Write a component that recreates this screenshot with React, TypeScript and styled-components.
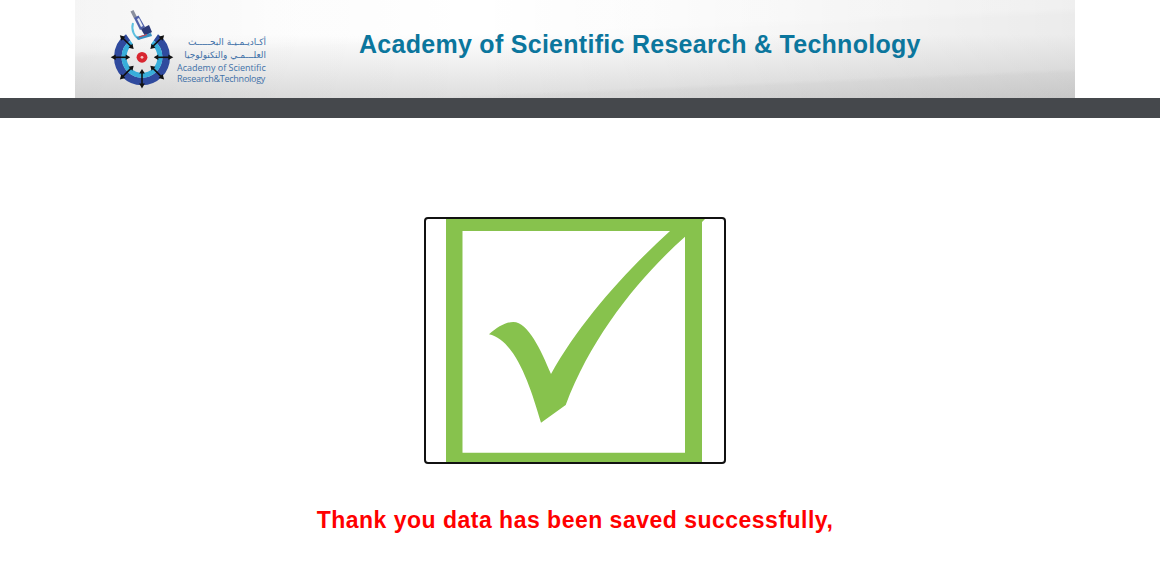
import styled, { createGlobalStyle } from 'styled-components';

const GlobalStyle = createGlobalStyle`
    html, body {
        margin: 0;
        padding: 0;
        background: #fff;
    }
`;

const Page = styled.div`
    width: 1160px;
`;

const Banner = styled.header`
    width: 1000px;
    height: 98px;
    margin-left: 75px;
    display: flex;
    align-items: flex-start;
    background:
        linear-gradient(177.5deg, rgba(0, 0, 0, 0) 79%, rgba(0, 0, 0, 0.025) 82%),
        linear-gradient(177.5deg, rgba(255, 255, 255, 0.22) 36%, rgba(255, 255, 255, 0) 41%),
        linear-gradient(90deg, rgba(0, 0, 0, 0.05) 0%, rgba(0, 0, 0, 0.015) 20%, rgba(0, 0, 0, 0) 40%, rgba(0, 0, 0, 0.02) 60%, rgba(0, 0, 0, 0.08) 100%),
        linear-gradient(180deg, #fff 0%, #fff 35%, #dedede 100%);
`;

const LogoMark = styled.svg`
    width: 70px;
    height: 84px;
    margin: 8px 0 0 33px;
    flex: none;
    filter: blur(0.3px);
`;

const LogoText = styled.div`
    width: 92px;
    margin: 36px 0 0 -1px;
    flex: none;
    color: #3f71a8;
    font-family: "Open Sans", "Liberation Sans", sans-serif;
    font-size: 9px;
    line-height: 11px;
`;

const ArabicLine = styled.div`
    direction: rtl;
    font-family: "DejaVu Sans", sans-serif;
    font-size: 9px;
    line-height: 13px;
    white-space: nowrap;
    padding-right: 3px;
`;

const LatinLine = styled.div<{ $spacing: number }>`
    white-space: nowrap;
    letter-spacing: ${(props) => props.$spacing}px;
`;

const BannerTitle = styled.h1`
    margin: 28px 0 0 90px;
    color: #0b769d;
    font-family: "Liberation Sans", Arial, sans-serif;
    font-size: 25px;
    font-weight: 700;
    line-height: 32px;
    letter-spacing: 0.28px;
    white-space: nowrap;
`;

const Bar = styled.div`
    height: 20px;
    background: #45484c;
`;

const Main = styled.main`
    width: 1150px;
    padding-top: 99px;
    display: flex;
    flex-direction: column;
    align-items: center;
`;

const Frame = styled.div`
    width: 298px;
    height: 243px;
    border: 2px solid #111;
    border-radius: 4px;
    overflow: hidden;
    background: #fff;
`;

const CheckPicture = styled.svg`
    display: block;
    width: 298px;
    height: 243px;
`;

const Message = styled.p`
    margin: 42px 0 0;
    color: #ff0000;
    font-family: "Liberation Sans", Arial, sans-serif;
    font-size: 23px;
    font-weight: 700;
    line-height: 28px;
    letter-spacing: 0.49px;
    white-space: nowrap;
`;

const arrowAngles = [45, 90, 135, 180, 225, 270, 315];

function Logo() {
    return (
        <LogoMark viewBox="108 8 70 84">
            <circle cx="142" cy="57.3" r="24.2" fill="none" stroke="#2f4a9e" strokeWidth="7.6" pathLength="360" strokeDasharray="290 70" strokeDashoffset="-305" />
            <circle cx="142" cy="57.3" r="18" fill="none" stroke="#38aeda" strokeWidth="5" pathLength="360" strokeDasharray="290 70" strokeDashoffset="-305" />
            <circle cx="142" cy="57.3" r="5.4" fill="#d8252f" />
            <circle cx="142" cy="57.3" r="1.4" fill="#f3c4c4" />
            {arrowAngles.map((angle) => (
                <g key={angle} transform={`rotate(${angle} 142 57.3)`}>
                    <path d="M142 29V43" stroke="#111" strokeWidth="1.6" />
                    <path d="M139.2 31L142 26L144.8 31Z" fill="#111" />
                    <path d="M139.2 41L142 45.5L144.8 41Z" fill="#111" />
                </g>
            ))}
            <path d="M130.5 11.5L133.5 10L137 17L134 18.5Z" fill="#8a8f9e" />
            <path d="M134 18L138.5 15.5L145 27L140 30Z" fill="#4e5fa8" />
            <path d="M137 19L139 18L143 26L141 27Z" fill="#e8ecf4" />
            <path d="M141 29L149 25L152 32L145 36Z" fill="#2c3a78" />
            <path d="M133 23C131 30 134 37 140 39" fill="none" stroke="#5ec1e0" strokeWidth="2" />
            <path d="M136 37L151 33L152 36L138 40Z" fill="#3a8fc0" />
            <path d="M139 37L147 34.5" stroke="#d8404a" strokeWidth="1" />
        </LogoMark>
    );
}

export default function App() {
    return (
        <Page>
            <GlobalStyle />
            <Banner>
                <Logo />
                <LogoText>
                    <ArabicLine>أكـاديـمـيـة البحـــــث</ArabicLine>
                    <ArabicLine>العلـــمـي والتكنولوجيا</ArabicLine>
                    <LatinLine $spacing={0}>Academy of Scientific</LatinLine>
                    <LatinLine $spacing={-0.25}>Research&amp;Technology</LatinLine>
                </LogoText>
                <BannerTitle>Academy of Scientific Research &amp; Technology</BannerTitle>
            </Banner>
            <Bar />
            <Main>
                <Frame>
                    <CheckPicture viewBox="426 219 298 243">
                        <path
                            fill="#87c24d"
                            fillRule="evenodd"
                            d="M446 219H705L702 222V462H446ZM462.5 231V452.7H685V236.7C640 277 592 335 565.7 405L541 422.7C530 385 515 340 489 334.3C497 327 506 322 513.3 322C528 322 541 350 551 374C580 322 625 272 670 231Z"
                        />
                    </CheckPicture>
                </Frame>
                <Message>Thank you data has been saved successfully,</Message>
            </Main>
        </Page>
    );
}
